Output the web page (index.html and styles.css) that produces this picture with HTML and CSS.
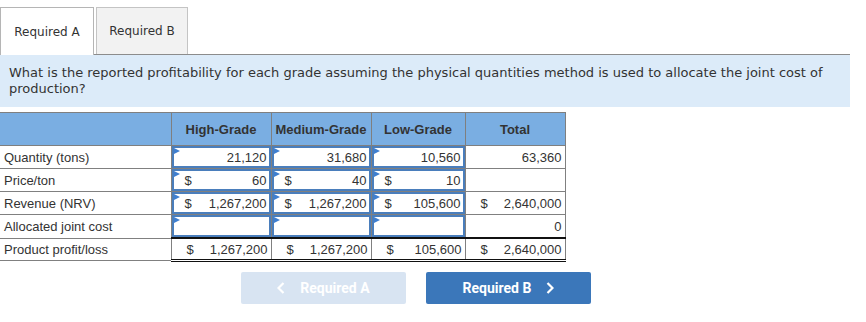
FILE: index.html
```html
<!DOCTYPE html>
<html>
<head>
<meta charset="utf-8">
<link rel="stylesheet" href="styles.css">
</head>
<body>
<div class="page">
  <div class="tabs">
    <div class="tab active">Required A</div>
    <div class="tab">Required B</div>
  </div>
  <div class="question">What is the reported profitability for each grade assuming the physical quantities method is used to allocate the joint cost of production?</div>

  <table class="grid">
    <colgroup>
      <col class="c-label"><col class="c-val"><col class="c-val"><col class="c-low"><col class="c-val">
    </colgroup>
    <thead>
      <tr>
        <th></th><th>High-Grade</th><th>Medium-Grade</th><th>Low-Grade</th><th>Total</th>
      </tr>
    </thead>
    <tbody>
      <tr>
        <td class="lbl">Quantity (tons)</td>
        <td class="in"><div class="box"><span class="cur"></span><span class="num">21,120</span></div></td>
        <td class="in"><div class="box"><span class="cur"></span><span class="num">31,680</span></div></td>
        <td class="in"><div class="box"><span class="cur"></span><span class="num">10,560</span></div></td>
        <td class="out"><div class="plain"><span class="cur"></span><span class="num">63,360</span></div></td>
      </tr>
      <tr>
        <td class="lbl">Price/ton</td>
        <td class="in"><div class="box"><span class="cur">$</span><span class="num">60</span></div></td>
        <td class="in"><div class="box"><span class="cur">$</span><span class="num">40</span></div></td>
        <td class="in"><div class="box"><span class="cur">$</span><span class="num">10</span></div></td>
        <td class="out"><div class="plain"></div></td>
      </tr>
      <tr>
        <td class="lbl">Revenue (NRV)</td>
        <td class="in"><div class="box"><span class="cur">$</span><span class="num">1,267,200</span></div></td>
        <td class="in"><div class="box"><span class="cur">$</span><span class="num">1,267,200</span></div></td>
        <td class="in"><div class="box"><span class="cur">$</span><span class="num">105,600</span></div></td>
        <td class="out"><div class="plain"><span class="cur">$</span><span class="num">2,640,000</span></div></td>
      </tr>
      <tr>
        <td class="lbl">Allocated joint cost</td>
        <td class="in"><div class="box"></div></td>
        <td class="in"><div class="box"></div></td>
        <td class="in"><div class="box"></div></td>
        <td class="out"><div class="plain"><span class="cur"></span><span class="num">0</span></div></td>
      </tr>
      <tr class="total">
        <td class="lbl">Product profit/loss</td>
        <td class="out"><div class="plain"><span class="cur">$</span><span class="num">1,267,200</span></div></td>
        <td class="out"><div class="plain"><span class="cur">$</span><span class="num">1,267,200</span></div></td>
        <td class="out"><div class="plain"><span class="cur">$</span><span class="num">105,600</span></div></td>
        <td class="out"><div class="plain"><span class="cur">$</span><span class="num">2,640,000</span></div></td>
      </tr>
    </tbody>
  </table>

  <div class="nav">
    <button class="btn prev" disabled><svg class="chev" width="8" height="12" viewBox="0 0 8 12"><polyline points="6.5,1 1.5,6 6.5,11" fill="none" stroke="#ffffff" stroke-width="2.2"/></svg>Required A</button>
    <button class="btn next">Required B<svg class="chev" width="8" height="12" viewBox="0 0 8 12"><polyline points="1.5,1 6.5,6 1.5,11" fill="none" stroke="#ffffff" stroke-width="2.2"/></svg></button>
  </div>
</div>
</body>
</html>
```

FILE: styles.css
```css
html, body {
  margin: 0;
  padding: 0;
  background: #ffffff;
}

.page {
  width: 866px;
  height: 322px;
  padding-top: 7px;
  box-sizing: border-box;
  font-family: "DejaVu Sans", Verdana, sans-serif;
  color: #333333;
}

.tabs {
  display: flex;
  gap: 2px;
  width: 850px;
  border-bottom: 1px solid #8c8c8c;
  height: 47px;
  box-sizing: content-box;
}

.tab {
  width: 92px;
  height: 47px;
  box-sizing: border-box;
  border: 1px solid #c4c4c4;
  border-bottom: none;
  background: #f2f2f2;
  font-size: 12px;
  display: flex;
  align-items: center;
  justify-content: center;
  color: #333333;
}

.tab.active {
  width: 94px;
  background: #ffffff;
  border-color: #b5b5b5;
  height: 48px;
  margin-bottom: -1px;
}

.question {
  width: 850px;
  box-sizing: border-box;
  background: #dcebf9;
  padding: 10px 9px 10px;
  font-size: 13px;
  line-height: 16px;
  color: #333333;
  height: 52px;
}

.grid {
  margin-top: 5px;
  border-collapse: collapse;
  table-layout: fixed;
  width: 565px;
  font-family: "Liberation Sans", Arial, sans-serif;
  font-size: 13px;
  color: #333333;
}

.c-label { width: 171px; }
.c-val { width: 100px; }
.c-low { width: 94px; }

.grid th {
  background: #7aaee2;
  height: 32px;
  border: 1px solid #7f7f7f;
  border-left-color: #8a8a8a;
  font-weight: bold;
  font-size: 13px;
  color: #333333;
  padding: 0;
  vertical-align: middle;
}

.grid th:first-child {
  border-left: none;
}

.grid td {
  border: 1px solid #808080;
  height: 22px;
  padding: 0;
  vertical-align: middle;
}

.grid td.lbl {
  border-left: none;
  padding-left: 4px;
  white-space: nowrap;
}

.box, .plain {
  position: relative;
  display: flex;
  justify-content: space-between;
  align-items: center;
  height: 22px;
  box-sizing: border-box;
}

.box {
  border: 2px solid #4a7ebc;
  padding: 0 2px 0 11px;
}

.box::before {
  content: "";
  position: absolute;
  left: 0;
  top: 0;
  width: 0;
  height: 0;
  border-top: 3px solid transparent;
  border-bottom: 3px solid transparent;
  border-left: 6px solid #3f7fd0;
}

.plain {
  padding: 0 3px 0 15px;
}

.total td {
  height: 20px;
}

.total .plain {
  height: 20px;
}

.total td.out {
  border-top: 2px solid #111111;
  border-bottom: 3px double #111111;
}

.total td.lbl {
  border-bottom: 1px solid #808080;
}

.nav {
  display: flex;
  gap: 20px;
  margin-left: 241px;
  margin-top: 10px;
}

.btn {
  width: 165px;
  height: 32px;
  border: none;
  border-radius: 2px;
  font-family: Roboto, "Liberation Sans", sans-serif;
  font-weight: bold;
  font-size: 14px;
  color: #ffffff;
  display: flex;
  align-items: center;
  justify-content: center;
  gap: 15px;
  padding: 0;
}

.btn.prev {
  background: #d8e4f2;
}

.btn.next {
  background: #3b77ba;
}

.chev {
  display: block;
}
```
